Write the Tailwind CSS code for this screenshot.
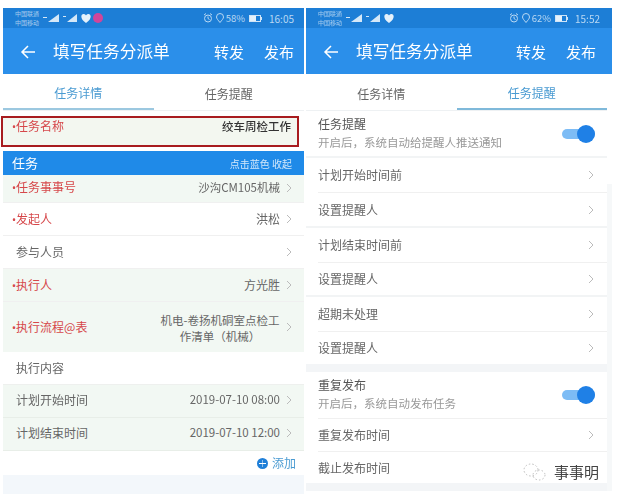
<!doctype html>
<html>
<head>
<meta charset="utf-8">
<script src="https://cdn.jsdelivr.net/npm/@tailwindcss/browser@4"></script>
</head>
<body class="bg-white">
<div class="relative flex w-[619px] h-[499px] overflow-hidden pt-2 pl-[3px] text-[12px] text-[#666] font-['Noto_Sans_CJK_SC','Noto_Sans',sans-serif] blur-[0.45px]">

  <!-- left phone -->
  <div class="w-[301px] shrink-0 flex flex-col">
    <div class="h-5 bg-[#1d7ed6] flex items-center pl-3 pr-[10px]">
      <div class="text-[6px] leading-[9px] w-[26px] text-white/60">中国联通<br>中国移动</div>
      <svg class="w-[38px] h-2.5 ml-0.5" viewBox="0 0 38 10" fill="#d5e8f8"><path d="M0 4h4v1H0zM5 9 16 1v8zM20 3h3v1h-3zM24 9 34 1v8z"/></svg>
      <svg class="w-[10px] h-[9px]" viewBox="0 0 10 9" fill="#e5f1fb"><path d="M5 9C-1 5-.500 0 2.500 0 3.500 0 4.500.500 5 1.500 5.500.500 6.500 0 7.500 0 10.500 0 11 5 5 9z"/></svg>
      <span class="w-2.5 h-2.5 rounded-full bg-[#d0459a] ml-0.5"></span>
      <div class="ml-auto flex items-center text-[9.500px] text-[#b9d8f3]">
        <svg class="w-2.5 h-2.5" viewBox="0 0 10 10" fill="none" stroke="currentColor"><circle cx="5" cy="5.500" r="3.500"/><path d="M5 3.500v2l1.500 1M1 2l2-1.500M9 2 7 .500"/></svg>
        <svg class="w-2.5 h-2.5 ml-0.5" viewBox="0 0 10 10" fill="none" stroke="currentColor"><path d="M5 9.500C3 7 1.500 5.500 1.500 4a3.500 3.500 0 0 1 7 0C8.500 5.500 7 7 5 9.500z"/></svg>
        <span class="ml-px">58%</span>
        <span class="ml-1 w-[12px] h-[7px] border border-[#cfe4f7] bg-[linear-gradient(90deg,#e5f1fb_58%,transparent_58%)]"></span>
        <span class="w-px h-[3px] bg-[#cfe4f7]"></span>
        <span class="ml-[7px] text-[10px]">16:05</span>
      </div>
    </div>
    <div class="h-[46px] bg-[#2b8fea] flex items-center pt-0.5 text-white">
      <svg class="w-4 h-4 ml-[17px]" viewBox="0 0 16 16" fill="none" stroke="currentColor" stroke-width="1.500"><path d="M15 8H2M8 2 2 8l6 6"/></svg>
      <span class="ml-[17px] text-[16.700px]">填写任务分派单</span>
      <span class="ml-auto text-[15px]">转发</span>
      <span class="ml-5 mr-2.5 text-[15px]">发布</span>
    </div>
    <div class="flex h-9 mt-px text-[12px] border-b border-[#eef1f3]">
      <div class="flex-1 flex items-center justify-center pt-0.5 text-[#4a9bd2] border-b-2 border-[#9cc8e0]">任务详情</div>
      <div class="flex-1 flex items-center justify-center pt-0.5">任务提醒</div>
    </div>
    <div class="h-[5px]"></div>
    <div class="-ml-0.5 w-[298px] h-[31px] bg-[#f3f7f0] border-2 border-[#a81c1f] flex items-center justify-between pl-[9px] pr-1.5 pb-2.5">
      <span class="text-[#d6474a]"><span class="font-['Roboto']">•</span>任务名称</span>
      <span class="text-[#333] font-medium text-[11.500px]">绞车周检工作</span>
    </div>
    <div class="h-1"></div>
    <div class="h-[24px] bg-[#1f8ae8] flex items-center justify-between pl-[9px] pr-[12px] text-white">
      <span class="text-[13px]">任务</span>
      <span class="text-[10px] text-white/80">点击蓝色 收起</span>
    </div>
    <div class="h-[28px] bg-[#f2f8f3] border-b border-[#f0f0f0] flex items-center pl-[9px] pr-3 pb-0.5"><span class="text-[#d6474a]"><span class="font-['Roboto']">•</span>任务事事号</span><span class="ml-auto text-[11.500px]">沙沟CM105机械</span><svg class="w-1.5 h-2.5 ml-1.5" viewBox="0 0 6 10" fill="none" stroke="#bbb"><path d="m1 1 4 4-4 4"/></svg></div>
    <div class="h-[33px] border-b border-[#f0f0f0] flex items-center pl-[9px] pr-3"><span class="text-[#d6474a]"><span class="font-['Roboto']">•</span>发起人</span><span class="ml-auto">洪松</span><svg class="w-1.5 h-2.5 ml-1.5" viewBox="0 0 6 10" fill="none" stroke="#bbb"><path d="m1 1 4 4-4 4"/></svg></div>
    <div class="h-[33px] border-b border-[#f0f0f0] flex items-center pl-[13px] pr-3"><span>参与人员</span><svg class="w-1.5 h-2.5 ml-auto" viewBox="0 0 6 10" fill="none" stroke="#bbb"><path d="m1 1 4 4-4 4"/></svg></div>
    <div class="h-[33px] bg-[#f2f8f3] border-b border-[#f0f0f0] flex items-center pl-[9px] pr-3"><span class="text-[#d6474a]"><span class="font-['Roboto']">•</span>执行人</span><span class="ml-auto">方光胜</span><svg class="w-1.5 h-2.5 ml-1.5" viewBox="0 0 6 10" fill="none" stroke="#bbb"><path d="m1 1 4 4-4 4"/></svg></div>
    <div class="h-[50px] bg-[#f2f8f3] flex items-center pl-[9px] pr-3"><span class="text-[#d6474a]"><span class="font-['Roboto']">•</span>执行流程@表</span><span class="ml-auto w-[120px] whitespace-nowrap text-center text-[11.500px] leading-4 pt-0.5">机电-卷扬机硐室点检工<br>作清单（机械）</span><svg class="w-1.5 h-2.5 ml-1.5" viewBox="0 0 6 10" fill="none" stroke="#bbb"><path d="m1 1 4 4-4 4"/></svg></div>
    <div class="h-[33px] border-b border-[#eef0ee] flex items-center pl-[13px]">执行内容</div>
    <div class="h-[33px] bg-[#f2f8f3] border-b border-[#e8eee8] flex items-center pl-[13px] pr-3 pb-0.5"><span>计划开始时间</span><span class="ml-auto text-[11.500px]">2019-07-10 08:00</span><svg class="w-1.5 h-2.5 ml-1.5" viewBox="0 0 6 10" fill="none" stroke="#bbb"><path d="m1 1 4 4-4 4"/></svg></div>
    <div class="h-[33px] bg-[#f2f8f3] border-b border-[#e8eee8] flex items-center pl-[13px] pr-3 pb-0.5"><span>计划结束时间</span><span class="ml-auto text-[11.500px]">2019-07-10 12:00</span><svg class="w-1.5 h-2.5 ml-1.5" viewBox="0 0 6 10" fill="none" stroke="#bbb"><path d="m1 1 4 4-4 4"/></svg></div>
    <div class="h-[24px] flex items-center justify-end gap-1 pr-2 text-[#4a9bd2]">
      <span class="relative w-[11px] h-[11px] rounded-full bg-[#1f7fd8] flex items-center justify-center"><span class="w-[7px] h-px bg-white"></span><span class="absolute w-px h-[7px] bg-white/50"></span></span>
      <span>添加</span>
    </div>
    <div class="h-[19px] bg-[#f3f7fb]"></div>
  </div>

  <!-- right phone -->
  <div class="w-[306px] ml-0.5 shrink-0 flex flex-col">
    <div class="h-5 bg-[#1d7ed6] flex items-center pl-3 pr-3">
      <div class="text-[6px] leading-[9px] w-[26px] text-white/60">中国联通<br>中国移动</div>
      <svg class="w-[38px] h-2.5 ml-0.5" viewBox="0 0 38 10" fill="#d5e8f8"><path d="M0 4h4v1H0zM5 9 16 1v8zM20 3h3v1h-3zM24 9 34 1v8z"/></svg>
      <svg class="w-[10px] h-[9px]" viewBox="0 0 10 9" fill="#e5f1fb"><path d="M5 9C-1 5-.500 0 2.500 0 3.500 0 4.500.500 5 1.500 5.500.500 6.500 0 7.500 0 10.500 0 11 5 5 9z"/></svg>
      <div class="ml-auto flex items-center text-[9.500px] text-[#b9d8f3]">
        <svg class="w-2.5 h-2.5" viewBox="0 0 10 10" fill="none" stroke="currentColor"><circle cx="5" cy="5.500" r="3.500"/><path d="M5 3.500v2l1.500 1M1 2l2-1.500M9 2 7 .500"/></svg>
        <svg class="w-2.5 h-2.5 ml-0.5" viewBox="0 0 10 10" fill="none" stroke="currentColor"><path d="M5 9.500C3 7 1.500 5.500 1.500 4a3.500 3.500 0 0 1 7 0C8.500 5.500 7 7 5 9.500z"/></svg>
        <span class="ml-px">62%</span>
        <span class="ml-1 w-[12px] h-[7px] border border-[#cfe4f7] bg-[linear-gradient(90deg,#e5f1fb_62%,transparent_62%)]"></span>
        <span class="w-px h-[3px] bg-[#cfe4f7]"></span>
        <span class="ml-[7px] text-[10px]">15:52</span>
      </div>
    </div>
    <div class="h-[46px] bg-[#2b8fea] flex items-center pt-0.5 text-white">
      <svg class="w-4 h-4 ml-[17px]" viewBox="0 0 16 16" fill="none" stroke="currentColor" stroke-width="1.500"><path d="M15 8H2M8 2 2 8l6 6"/></svg>
      <span class="ml-[17px] text-[16.700px]">填写任务分派单</span>
      <span class="ml-auto text-[15px]">转发</span>
      <span class="ml-5 mr-4 text-[15px]">发布</span>
    </div>
    <div class="flex h-9 mt-px w-[301px] border-b border-[#eef1f3]">
      <div class="flex-1 flex items-center justify-center pt-0.5">任务详情</div>
      <div class="flex-1 flex items-center justify-center pt-0.5 text-[#4a9bd2] border-b-2 border-[#7fb9da]">任务提醒</div>
    </div>
    <div class="flex">
      <div class="w-[301px] flex flex-col">
        <div class="h-[47px] border-b-2 border-[#f2f4f5] flex items-center pl-3 pr-3">
          <div class="leading-[18px] -mt-0.5"><div class="text-[#555]">任务提醒</div><div class="text-[#999] text-[11.500px]">开启后，系统自动给提醒人推送通知</div></div>
          <span class="ml-auto relative w-[33px] h-2.5 rounded-full bg-[#7dbcf5]"><span class="absolute right-0 -top-1 w-[18px] h-[18px] rounded-full bg-[#1f80e6]"></span></span>
        </div>
        <div class="h-[34px] flex items-center pl-3 pr-[13px]"><span class="flex-1">计划开始时间前</span><svg class="w-1.5 h-2.5" viewBox="0 0 6 10" fill="none" stroke="#bbb"><path d="m1 1 4 4-4 4"/></svg></div>
        <div class="h-[34px] ml-3 pr-[13px] border-t border-[#f0f0f0] flex items-center"><span class="flex-1">设置提醒人</span><svg class="w-1.5 h-2.5" viewBox="0 0 6 10" fill="none" stroke="#bbb"><path d="m1 1 4 4-4 4"/></svg></div>
        <div class="h-[36px] border-t-2 border-[#f2f4f5] flex items-center pl-3 pr-[13px]"><span class="flex-1">计划结束时间前</span><svg class="w-1.5 h-2.5" viewBox="0 0 6 10" fill="none" stroke="#bbb"><path d="m1 1 4 4-4 4"/></svg></div>
        <div class="h-[33px] ml-3 pr-[13px] border-t border-[#f0f0f0] flex items-center"><span class="flex-1">设置提醒人</span><svg class="w-1.5 h-2.5" viewBox="0 0 6 10" fill="none" stroke="#bbb"><path d="m1 1 4 4-4 4"/></svg></div>
        <div class="h-[36px] border-t-2 border-[#f2f4f5] flex items-center pl-3 pr-[13px]"><span class="flex-1">超期未处理</span><svg class="w-1.5 h-2.5" viewBox="0 0 6 10" fill="none" stroke="#bbb"><path d="m1 1 4 4-4 4"/></svg></div>
        <div class="h-[33px] ml-3 pr-[13px] border-t border-[#f0f0f0] flex items-center"><span class="flex-1">设置提醒人</span><svg class="w-1.5 h-2.5" viewBox="0 0 6 10" fill="none" stroke="#bbb"><path d="m1 1 4 4-4 4"/></svg></div>
        <div class="h-2 bg-[#f3f5f7]"></div>
        <div class="h-[46px] flex items-center pl-3 pr-3">
          <div class="leading-[18px] -mt-0.5"><div class="text-[#555]">重复发布</div><div class="text-[#999] text-[11.500px]">开启后，系统自动发布任务</div></div>
          <span class="ml-auto relative w-[33px] h-2.5 rounded-full bg-[#7dbcf5]"><span class="absolute right-0 -top-1 w-[18px] h-[18px] rounded-full bg-[#1f80e6]"></span></span>
        </div>
        <div class="h-[33px] ml-3 pr-[13px] border-t border-[#f0f0f0] flex items-center"><span class="flex-1">重复发布时间</span><svg class="w-1.5 h-2.5" viewBox="0 0 6 10" fill="none" stroke="#bbb"><path d="m1 1 4 4-4 4"/></svg></div>
        <div class="h-[32px] ml-3 border-t border-[#f0f0f0] flex items-center">截止发布时间</div>
        <div class="h-2 bg-[#f3f5f7]"></div>
      </div>
      <div class="w-[5px] mt-[73px] bg-[#f6f8f9]"></div>
    </div>
  </div>

  <!-- watermark -->
  <div class="absolute left-[522px] top-[461px] flex items-center gap-1.5 text-[15px] text-[#444]">
    <svg class="w-[26px] h-[22px]" viewBox="0 0 26 22" fill="none" stroke="#bbb" stroke-dasharray="1.500 2"><ellipse cx="9" cy="9" rx="7" ry="6"/><ellipse cx="17" cy="14" rx="6" ry="5"/></svg>
    <span>事事明</span>
  </div>
</div>
</body>
</html>
